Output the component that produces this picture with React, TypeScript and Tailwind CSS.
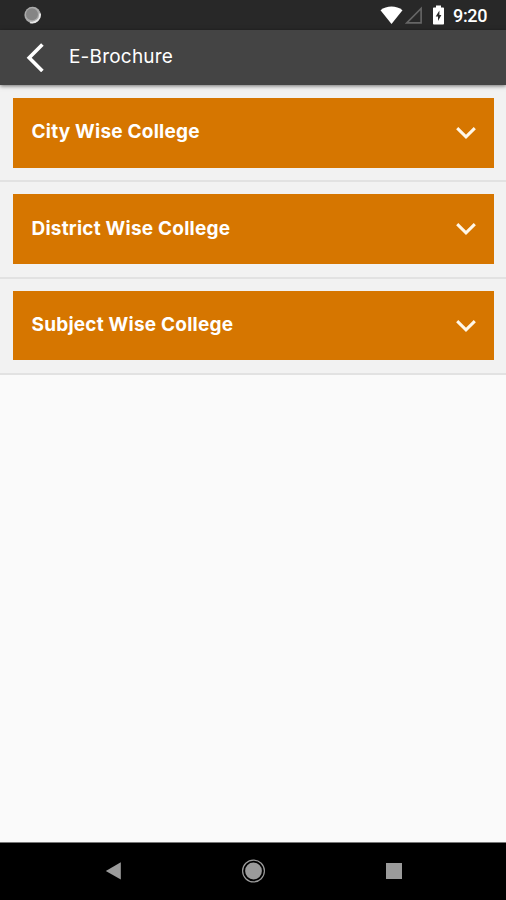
const sections = ["City Wise College", "District Wise College", "Subject Wise College"];

function StatusBar() {
  return (
    <div className="flex h-[30px] shrink-0 items-center bg-[#282828] pl-6 pr-[18px]">
      <svg width="18" height="18" viewBox="0 0 18 18">
        <circle cx="8.6" cy="9" r="8.2" fill="#aaa" />
        <path d="M16 7.5A8 8 0 0 1 6.1 16.3" fill="none" stroke="#e8e8e8" strokeWidth="1.8" />
        <circle cx="8" cy="8.2" r="6" fill="#858585" />
      </svg>
      <svg className="ml-auto" width="23" height="20" viewBox="0 0 23 20" fill="#fff">
        <path d="M0.5 5.2C6.5 .3 16.5 .3 22.5 5.2L11.5 19Z" />
      </svg>
      <svg className="ml-0.5" width="18" height="18" viewBox="0 0 18 18" fill="none" stroke="#666" strokeWidth="1.6">
        <path d="M1.8 16.9H16.1V2.4Z" />
      </svg>
      <svg className="ml-[9px]" width="13" height="20" viewBox="0 0 13 20">
        <path d="M4 .5H9V2.5H11.2Q12 2.5 12 3.3V18.7Q12 19.5 11.2 19.5H1.8Q1 19.5 1 18.7V3.3Q1 2.5 1.8 2.5H4Z" fill="#fff" />
        <path d="M7.4 5.5L3.7 11.5H6V16L9.4 10H7.4Z" fill="#282828" />
      </svg>
      <span className="ml-[8px] w-[35px] whitespace-nowrap pt-px font-[Roboto,sans-serif] text-[18px] font-medium leading-none tracking-[-0.35px] text-white">
        9:20
      </span>
    </div>
  );
}

function Header() {
  return (
    <header className="z-10 flex h-[54.5px] shrink-0 items-center bg-[#444] pl-[26px] shadow-[0_1px_4px_rgba(0,0,0,0.55)]">
      <svg width="18" height="30" viewBox="0 0 18 30" fill="none" stroke="#fff" strokeWidth="3.6">
        <path d="M16.4 2.4L3.2 15.7L16.4 29" />
      </svg>
      <h1 className="ml-[25px] whitespace-nowrap pb-[2px] font-[Inter,sans-serif] text-[19px] font-normal leading-none tracking-[0.2px] text-white">
        E-Brochure
      </h1>
    </header>
  );
}

export default function App() {
  return (
    <div className="flex h-[900px] w-[506px] flex-col overflow-hidden bg-[#fafafa]">
      <StatusBar />
      <Header />
      <main className="flex-1">
        {sections.map((title, i) => (
          <section
            key={title}
            className={`border-b-2 border-[#e2e2e2] bg-[#f2f2f2] pb-[12.9px] pl-[13px] pr-3 ${i === 0 ? "pt-[13.5px]" : "pt-3"}`}
          >
            <button className="flex h-[69.5px] w-full items-center justify-between bg-[#d67600] pl-[18.5px] pr-[17px] text-left">
              <span className="whitespace-nowrap pb-px font-[Inter,sans-serif] text-[19px] font-bold leading-6 tracking-[0.22px] text-white">
                {title}
              </span>
              <svg width="22" height="14" viewBox="0 0 22 14" fill="none" stroke="#fff7e8" strokeWidth="3">
                <path d="M2.2 2.1L11 10.8L19.8 2.1" />
              </svg>
            </button>
          </section>
        ))}
      </main>
      <nav className="flex h-[58.5px] shrink-0 items-center justify-between border-t border-[#777] bg-black pl-[105px] pr-[104.5px]">
        <svg width="17" height="18" viewBox="0 0 17 18" fill="#9b9b9b">
          <path d="M.8 9L15.8 .3V17.5Z" />
        </svg>
        <svg width="24" height="24" viewBox="0 0 24 24">
          <circle cx="11.5" cy="12" r="10.9" fill="none" stroke="#9b9b9b" strokeWidth="1.2" />
          <circle cx="11.5" cy="12" r="8.4" fill="#9b9b9b" />
        </svg>
        <div className="size-4 bg-[#9b9b9b]" />
      </nav>
    </div>
  );
}
